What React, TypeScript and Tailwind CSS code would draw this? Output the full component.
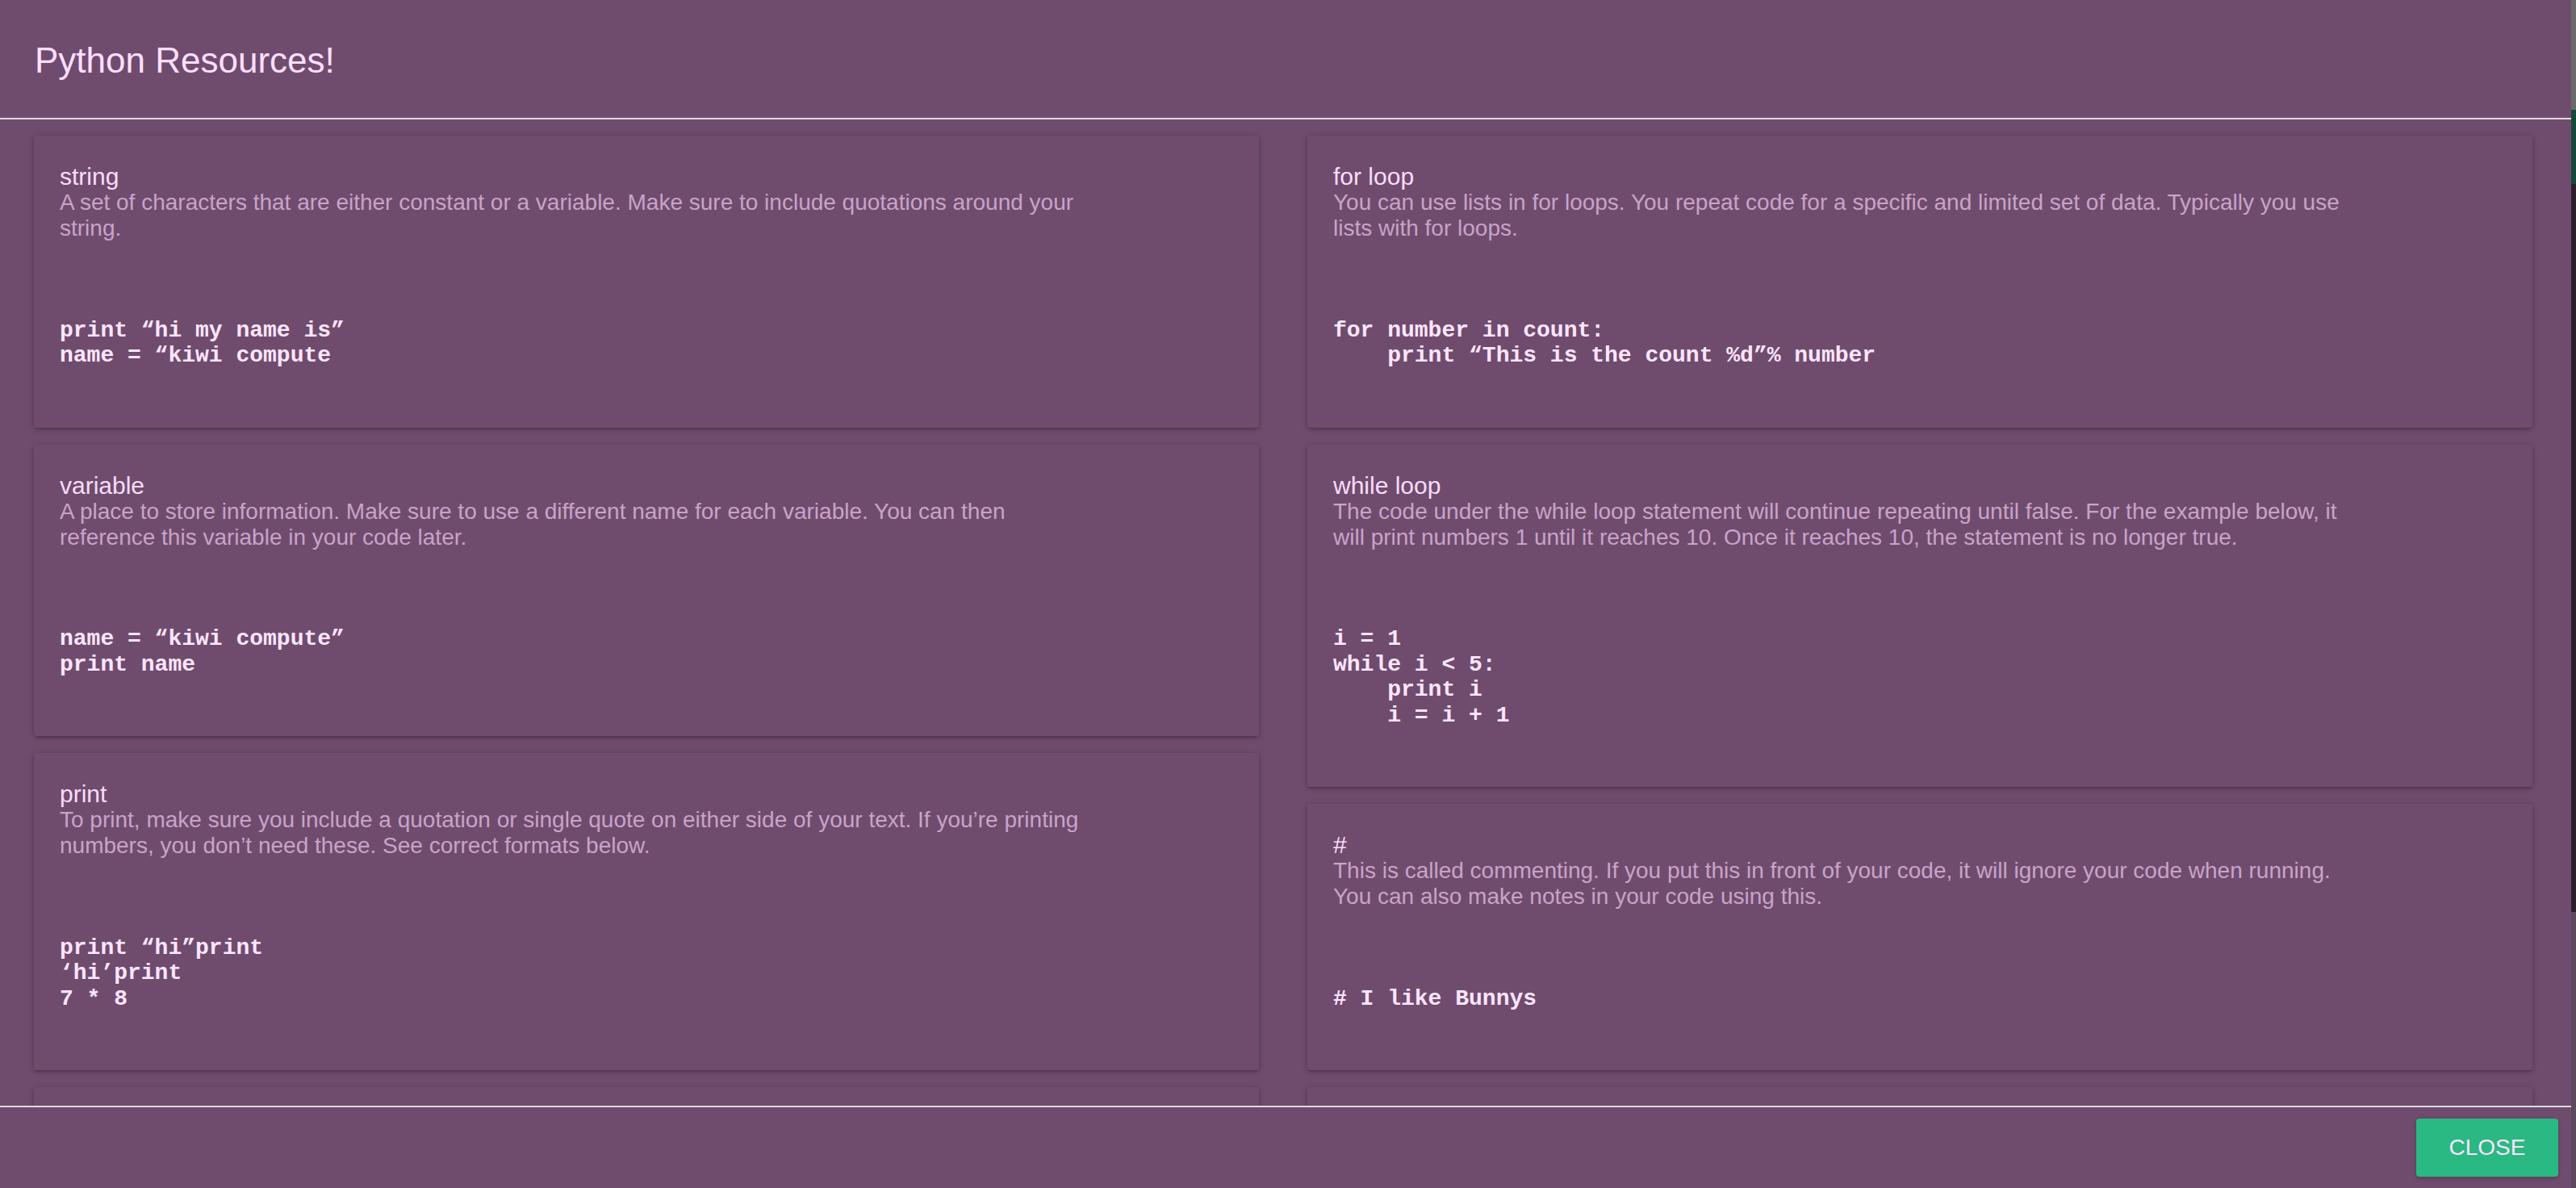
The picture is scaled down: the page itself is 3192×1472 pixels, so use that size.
type Resource = {
  title: string
  description: string
  code: string
}

const leftColumn: Resource[] = [
  {
    title: 'string',
    description:
      'A set of characters that are either constant or a variable. Make sure to include quotations around your string.',
    code: 'print “hi my name is”\nname = “kiwi compute',
  },
  {
    title: 'variable',
    description:
      'A place to store information. Make sure to use a different name for each variable. You can then reference this variable in your code later.',
    code: 'name = “kiwi compute”\nprint name',
  },
  {
    title: 'print',
    description:
      'To print, make sure you include a quotation or single quote on either side of your text. If you’re printing numbers, you don’t need these. See correct formats below.',
    code: 'print “hi”print\n‘hi’print\n7 * 8',
  },
]

const rightColumn: Resource[] = [
  {
    title: 'for loop',
    description:
      'You can use lists in for loops. You repeat code for a specific and limited set of data. Typically you use lists with for loops.',
    code: 'for number in count:\n    print “This is the count %d”% number',
  },
  {
    title: 'while loop',
    description:
      'The code under the while loop statement will continue repeating until false. For the example below, it will print numbers 1 until it reaches 10. Once it reaches 10, the statement is no longer true.',
    code: 'i = 1\nwhile i < 5:\n    print i\n    i = i + 1',
  },
  {
    title: '#',
    description:
      'This is called commenting. If you put this in front of your code, it will ignore your code when running. You can also make notes in your code using this.',
    code: '# I like Bunnys',
  },
]

const cardClass =
  'rounded-[4px] bg-[#6f4c6e] shadow-[0_2px_4px_0_rgba(0,0,0,0.14),0_3px_2px_-2px_rgba(0,0,0,0.12),0_1px_8px_0_rgba(0,0,0,0.2)]'

const ResourceCard: React.FC<{ resource: Resource }> = ({ resource }) => (
  <article className={`${cardClass} px-[32px] pb-[73px] pt-[35px]`}>
    <h3 className="text-[30px] leading-[32px] text-[#f9dcf9]">
      {resource.title}
    </h3>
    <p className="max-w-[1270px] text-[28px] leading-[32px] text-[#c9a3c9]">
      {resource.description}
    </p>
    <pre className="mt-[94.5px] whitespace-pre font-['Liberation_Mono','Courier_New',monospace] text-[28px] font-bold leading-[31.5px] text-[#ffe6ff]">
      {resource.code}
    </pre>
  </article>
)

// next card in the list, scrolled below the fold
const HiddenCard = () => <div className={`${cardClass} h-[330px]`} />

export default function App() {
  return (
    <div className="flex h-[1472px] w-full overflow-hidden bg-[#6f4c6e] font-['Liberation_Sans',Arial,sans-serif]">
      <div className="flex min-w-0 flex-1 flex-col">
        <header className="h-[146px] shrink-0 pl-[43px] pt-[51px]">
          <h1 className="text-[44px] leading-[48px] text-[#ffdfff]">
            Python Resources!
          </h1>
        </header>
        <div className="h-[2px] shrink-0 bg-[#dcdcdc]" />

        <main className="min-h-0 flex-1 overflow-hidden pl-[42px] pr-[48px] pt-[20px]">
          <div className="grid grid-cols-2 items-start gap-x-[60px]">
            <div className="flex flex-col gap-[21px]">
              {leftColumn.map(resource => (
                <ResourceCard key={resource.title} resource={resource} />
              ))}
              <HiddenCard />
            </div>
            <div className="flex flex-col gap-[21px]">
              {rightColumn.map(resource => (
                <ResourceCard key={resource.title} resource={resource} />
              ))}
              <HiddenCard />
            </div>
          </div>
        </main>

        <div className="h-[2px] shrink-0 bg-[#dcdcdc]" />
        <footer className="flex h-[100px] shrink-0 items-start justify-end pr-[16px] pt-[14px]">
          <button className="h-[72px] w-[176px] rounded-[4px] bg-[#2ab883] text-[28px] text-[#fde2fd] shadow-[0_2px_5px_0_rgba(0,0,0,0.2)]">
            CLOSE
          </button>
        </footer>
      </div>

      {/* page scrollbar peeking at the right edge */}
      <div className="flex w-[6px] shrink-0 flex-col">
        <div className="h-[136px] bg-[#6b6b6b]" />
        <div className="h-[92px] bg-[#154a3a]" />
        <div className="h-[902px] bg-[#2b1f2d]" />
        <div className="flex-1 bg-[#5e4a5e]" />
      </div>
    </div>
  )
}
